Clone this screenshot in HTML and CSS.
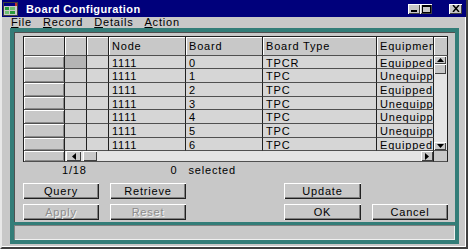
FILE: index.html
```html
<!DOCTYPE html>
<html lang="en">
<head>
    <meta charset="UTF-8">
    <title>Board Configuration</title>
    <link rel="stylesheet" href="styles.css">
</head>
<body>
    <div class="window">
        <div class="titlebar">
            <svg class="app-icon" width="15" height="14" viewBox="0 0 15 14">
                <rect x="0.5" y="0.5" width="14" height="13" fill="#c8c8c8" stroke="#404040"/>
                <rect x="1" y="1" width="13" height="3" fill="#000080"/>
                <rect x="2" y="5" width="4" height="3" fill="#2a9a3a"/>
                <rect x="7" y="5" width="5" height="3" fill="#6cc070"/>
                <rect x="2" y="9" width="4" height="3" fill="#6cc070"/>
                <rect x="7" y="9" width="5" height="3" fill="#2a9a3a"/>
                <rect x="12" y="1" width="2" height="3" fill="#c03030"/>
            </svg>
            <span class="title">Board Configuration</span>
            <div class="controls">
                <span class="ctl">
                    <svg width="8" height="7" viewBox="0 0 8 7"><rect x="1" y="5" width="6" height="2" fill="#000"/></svg>
                </span>
                <span class="ctl">
                    <svg width="9" height="8" viewBox="0 0 9 8"><rect x="0.5" y="0.5" width="8" height="7" fill="none" stroke="#000"/><rect x="0" y="0" width="9" height="2" fill="#000"/></svg>
                </span>
                <span class="ctl close">
                    <svg width="8" height="7" viewBox="0 0 8 7"><path d="M1 0 L7 7 M7 0 L1 7" stroke="#000" stroke-width="1.5"/></svg>
                </span>
            </div>
        </div>

        <div class="menubar">
            <span><u>F</u>ile</span>
            <span><u>R</u>ecord</span>
            <span><u>D</u>etails</span>
            <span><u>A</u>ction</span>
        </div>

        <div class="frame">
            <div class="panel">
                <div class="grid">
                    <div class="hd"></div><div class="hd"></div><div class="hd"></div>
                    <div class="hd">Node</div><div class="hd">Board</div><div class="hd">Board Type</div><div class="hd">Equipment</div><div class="hd"></div>

                    <div class="rh"></div><div class="c2 sel"></div><div class="c3"></div>
                    <div class="cell">1111</div><div class="cell">0</div><div class="cell">TPCR</div><div class="cell">Equipped</div>
                    <div class="vscroll">
                        <span class="arrow-v"><svg width="7" height="4" viewBox="0 0 7 4"><polygon points="3.5,0 7,4 0,4" fill="#000"/></svg></span>
                        <span class="thumb-v"></span>
                        <span class="track"></span>
                        <span class="arrow-v"><svg width="7" height="4" viewBox="0 0 7 4"><polygon points="0,0 7,0 3.5,4" fill="#000"/></svg></span>
                    </div>

                    <div class="rh"></div><div class="c2"></div><div class="c3"></div>
                    <div class="cell">1111</div><div class="cell">1</div><div class="cell">TPC</div><div class="cell">Unequipped</div>

                    <div class="rh"></div><div class="c2"></div><div class="c3"></div>
                    <div class="cell">1111</div><div class="cell">2</div><div class="cell">TPC</div><div class="cell">Equipped</div>

                    <div class="rh"></div><div class="c2"></div><div class="c3"></div>
                    <div class="cell">1111</div><div class="cell">3</div><div class="cell">TPC</div><div class="cell">Unequipped</div>

                    <div class="rh"></div><div class="c2"></div><div class="c3"></div>
                    <div class="cell">1111</div><div class="cell">4</div><div class="cell">TPC</div><div class="cell">Unequipped</div>

                    <div class="rh"></div><div class="c2"></div><div class="c3"></div>
                    <div class="cell">1111</div><div class="cell">5</div><div class="cell">TPC</div><div class="cell">Unequipped</div>

                    <div class="rh"></div><div class="c2"></div><div class="c3"></div>
                    <div class="cell">1111</div><div class="cell">6</div><div class="cell">TPC</div><div class="cell">Equipped</div>

                    <div class="rh foot"></div>
                    <div class="hscroll">
                        <span class="arrow-h"><svg width="4" height="7" viewBox="0 0 4 7"><polygon points="0,3.5 4,0 4,7" fill="#000"/></svg></span>
                        <span class="thumb-h"></span>
                        <span class="track"></span>
                        <span class="arrow-h"><svg width="4" height="7" viewBox="0 0 4 7"><polygon points="0,0 4,3.5 0,7" fill="#000"/></svg></span>
                    </div>
                    <div class="corner"></div>
                </div>

                <div class="info">
                    <span class="count">1/18</span>
                    <span class="selected"><span class="num">0</span>selected</span>
                </div>

                <div class="buttons">
                    <button class="btn">Query</button>
                    <button class="btn">Retrieve</button>
                    <span></span>
                    <button class="btn">Update</button>
                    <span></span>
                    <button class="btn" disabled>Apply</button>
                    <button class="btn" disabled>Reset</button>
                    <span></span>
                    <button class="btn">OK</button>
                    <button class="btn">Cancel</button>
                </div>
            </div>
            <div class="status"></div>
        </div>
    </div>
</body>
</html>
```

FILE: styles.css
```css
* {
    box-sizing: border-box;
}
body {
    margin: 0;
    background: #ffffff;
    font-family: "Liberation Sans", Arial, sans-serif;
    font-size: 11px;
    letter-spacing: 0.8px;
    color: #000;
}
.window {
    width: 468px;
    height: 249px;
    background: #c8c8c8;
    border-left: 2px solid #e8e8e8;
    border-right: 2px solid #404040;
    border-bottom: 2px solid #404040;
    box-shadow: inset -1px -1px #ffffff;
}
.titlebar {
    height: 17px;
    background: #00007b;
    display: flex;
    align-items: center;
    padding: 0 4px 0 1px;
}
.app-icon {
    margin-right: 8px;
}
.title {
    color: #fff;
    font-weight: bold;
    letter-spacing: 0.4px;
}
.controls {
    margin-left: auto;
    display: flex;
}
.ctl {
    width: 12px;
    height: 10px;
    background: #c8c8c8;
    box-shadow: inset 1px 1px #fff, inset -1px -1px #404040;
    display: flex;
    align-items: center;
    justify-content: center;
}
.ctl.close {
    width: 13px;
    margin-left: 17px;
}
.menubar {
    height: 11px;
    display: flex;
    align-items: center;
    gap: 11px;
    padding-left: 9px;
    line-height: 11px;
}
.frame {
    margin-left: 8px;
    width: 449px;
    height: 216px;
    background: #337d78;
    padding: 4px;
    display: flex;
    flex-direction: column;
    gap: 3px;
}
.panel {
    height: 190px;
    background: #c8c8c8;
    padding: 4px 0 0 9px;
    box-shadow: inset 1px 1px #505050;
}
.grid {
    display: grid;
    grid-template-columns: 41px 22px 22px 77px 77px 114px 57px 14px;
    grid-template-rows: 19px 13px 14px 14px 13px 14px 14px 13px 11px;
    width: 425px;
    border-top: 1px solid #202020;
    border-left: 1px solid #202020;
}
.grid > div {
    border-right: 1px solid #202020;
    border-bottom: 1px solid #505050;
    overflow: hidden;
    white-space: nowrap;
}
.hd {
    background: #c8c8c8;
    box-shadow: inset 1px 1px #fff;
    padding: 3px 0 0 3px;
}
.rh {
    background: #c8c8c8;
    box-shadow: inset 1px 1px #fff, inset -1px -1px #8a8a8a;
}
.c2 {
    background: #d2d2d2;
}
.c2.sel {
    background: #b4b4b4;
}
.c3 {
    background: #d6d6d6;
}
.cell {
    background: #d6d6d6;
    padding: 1px 0 0 3px;
}
.vscroll {
    grid-column: 8;
    grid-row: 2 / 9;
    display: flex;
    flex-direction: column;
    background: #e4e4e4;
    padding-right: 1px;
}
.arrow-v {
    height: 8px;
    background: #c8c8c8;
    box-shadow: inset 1px 1px #fff, inset -1px -1px #404040;
    display: flex;
    align-items: center;
    justify-content: center;
}
.thumb-v {
    height: 10px;
    background: #c8c8c8;
    box-shadow: inset 1px 1px #fff, inset -1px -1px #404040;
}
.track {
    flex: 1;
}
.hscroll {
    grid-column: 2 / 8;
    display: flex;
    background: #e4e4e4;
    padding-left: 1px;
    gap: 2px;
}
.arrow-h {
    width: 15px;
    background: #c8c8c8;
    box-shadow: inset 1px 1px #fff, inset -1px -1px #404040;
    display: flex;
    align-items: center;
    justify-content: center;
}
.arrow-h:last-child {
    width: 12px;
}
.thumb-h {
    width: 14px;
    background: #c8c8c8;
    box-shadow: inset 1px 1px #fff, inset -1px -1px #404040;
}
.corner {
    background: #c8c8c8;
}
.info {
    height: 17px;
    display: flex;
    align-items: center;
    padding: 0 0 2px 39px;
}
.selected {
    margin-left: 84px;
}
.num {
    margin-right: 11px;
}
.buttons {
    margin-top: 4px;
    display: grid;
    grid-template-columns: 76px 76px 76px 77px 76px;
    grid-template-rows: 16px 16px;
    column-gap: 11px;
    row-gap: 5px;
}
.btn {
    font: inherit;
    letter-spacing: inherit;
    color: #000;
    background: #c8c8c8;
    border: none;
    padding: 0;
    box-shadow: inset 1px 1px #fff, inset -1px -1px #202020, inset -2px -2px #808080;
}
.btn:disabled {
    color: #8c8c8c;
    text-shadow: 1px 1px #f4f4f4;
}
.status {
    height: 15px;
    background: #c8c8c8;
    box-shadow: inset 1px 1px #808080, inset -1px -1px #f0f0f0;
}
```
